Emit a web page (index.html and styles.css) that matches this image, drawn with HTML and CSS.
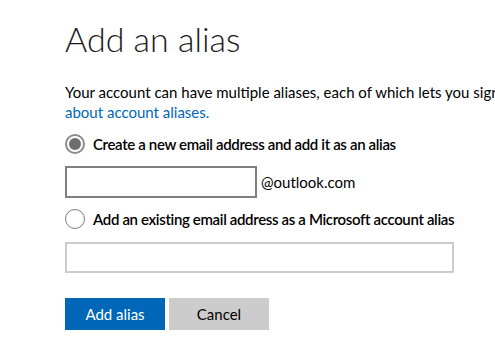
FILE: index.html
```html
<!DOCTYPE html>
<html lang="en">
<head>
    <meta charset="UTF-8">
    <meta name="viewport" content="width=device-width, initial-scale=1.0">
    <title>Add an alias</title>
    <link rel="stylesheet" href="styles.css">
</head>
<body>
    <div class="container">
        <h1>Add an alias</h1>
        <p class="intro">Your account can have multiple aliases, each of which lets you sign in with the same password. <a href="#">Learn more<br>about account aliases.</a></p>

        <form class="alias-form">
            <label class="option">
                <input type="radio" name="aliasType" value="new" checked>
                <span>Create a new email address and add it as an alias</span>
            </label>
            <div class="field-row">
                <input type="text" class="text-input short">
                <span class="domain">@outlook.com</span>
            </div>

            <label class="option">
                <input type="radio" name="aliasType" value="existing">
                <span>Add an existing email address as a Microsoft account alias</span>
            </label>
            <div class="field-row">
                <input type="text" class="text-input wide">
            </div>

            <div class="actions">
                <button type="submit" class="btn btn-primary">Add alias</button>
                <button type="button" class="btn btn-secondary">Cancel</button>
            </div>
        </form>
    </div>
</body>
</html>
```

FILE: styles.css
```css
html, body {
    overflow: hidden;
}

body {
    margin: 0;
    font-family: 'Lato', 'Open Sans', sans-serif;
    color: #000;
    background: #fff;
}

.container {
    padding: 19px 0 0 65px;
}

h1 {
    margin: 0;
    font-size: 34px;
    font-weight: 300;
    line-height: 40px;
    color: #1a1a1a;
}

.intro {
    margin: 23px 0 0;
    font-size: 15px;
    line-height: 20px;
    white-space: nowrap;
}

.intro a {
    color: #0067b8;
    text-decoration: none;
}

.alias-form {
    margin-top: 12px;
}

.option {
    display: flex;
    align-items: center;
    gap: 8px;
    height: 20px;
    font-size: 15px;
    font-weight: 600;
    letter-spacing: -0.35px;
    white-space: nowrap;
}

.option input {
    appearance: none;
    -webkit-appearance: none;
    flex: none;
    margin: 0;
    width: 20px;
    height: 20px;
    border: 1px solid #7a7a7a;
    border-radius: 50%;
    display: grid;
    place-items: center;
}

.option input:checked {
    border: 2px solid #8a8a8a;
}

.option input:checked::after {
    content: '';
    width: 12px;
    height: 12px;
    border-radius: 50%;
    background: #6e6e6e;
}

.field-row {
    display: flex;
    align-items: center;
    gap: 4px;
    margin: 12px 0 11px;
}

.text-input {
    box-sizing: border-box;
    margin: 0;
    height: 32px;
    border: 2px solid #808080;
    background: #fff;
    font-family: inherit;
    font-size: 15px;
}

.text-input.short {
    width: 192px;
}

.text-input.wide {
    width: 389px;
    height: 31px;
    border-color: #cccccc;
}

.domain {
    font-size: 15px;
}

.field-row + .option + .field-row {
    margin: 13px 0 0;
}

.actions {
    display: flex;
    gap: 4px;
    margin-top: 25px;
}

.btn {
    width: 100px;
    height: 32px;
    border: none;
    font-family: inherit;
    font-size: 15px;
    cursor: pointer;
}

.btn-primary {
    background: #0067b8;
    color: #fff;
}

.btn-secondary {
    background: #cccccc;
    color: #000;
}
```
